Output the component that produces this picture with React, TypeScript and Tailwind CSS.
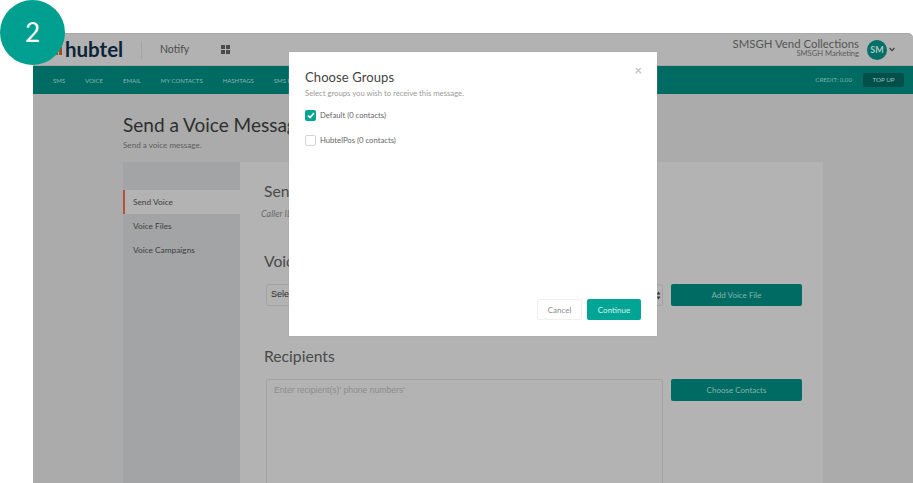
import React from "react";

const nav = ["SMS", "VOICE", "EMAIL", "MY CONTACTS", "HASHTAGS", "SMS REPORTS"];

export default function App() {
  return (
    <div className="relative w-[913px] h-[483px] overflow-hidden bg-white font-['Lato','Open_Sans',sans-serif]">
      <div className="ml-[33px] mt-[33px] absolute inset-0 w-[880px] h-[450px] flex flex-col rounded-tr-[5px] bg-[#ababab] overflow-hidden border-t border-[#a9a9a9]">
        <header className="h-[32px] shrink-0 flex items-center bg-[#b2b2b2] border-b border-[#a5a5a5]">
          <svg className="ml-[21px] shrink-0" width="8" height="10" viewBox="0 0 8 10" fill="#a8482a">
            <path d="M0 3 L4 0 V10 H0 Z" />
            <path d="M5 2 H8 V10 H5 Z" />
          </svg>
          <div className="ml-[3px] w-[58px] flex items-center text-[20.5px] leading-none font-bold text-[#0c2438]">hubtel</div>
          <div className="ml-[18px] h-[18px] w-px bg-[#a3a3a3]" />
          <span className="ml-[18px] text-[10.5px] text-[#4a4a4a]">Notify</span>
          <svg className="ml-[32px]" width="9" height="9" viewBox="0 0 9 9" fill="#4b4b4b">
            <rect x="0" y="0" width="4" height="4" />
            <rect x="5" y="0" width="4" height="4" />
            <rect x="0" y="5" width="4" height="4" />
            <rect x="5" y="5" width="4" height="4" />
          </svg>
          <div className="ml-auto flex flex-col items-end leading-none -mt-[4px]">
            <span className="text-[11.4px] text-[#555]">SMSGH Vend Collections</span>
            <span className="mt-[1px] text-[7.6px] text-[#5a5a5a]">SMSGH Marketing</span>
          </div>
          <div className="ml-[8px] w-[20px] h-[20px] rounded-full bg-[#006f66] flex items-center justify-center text-[9px] font-bold text-[#a8c8c4]">SM</div>
          <svg className="ml-[2px] mr-[18px]" width="6" height="5" viewBox="0 0 6 5" fill="none" stroke="#3d3d3d" strokeWidth="1.2">
            <path d="M0.6 1 L3 3.6 L5.4 1" />
          </svg>
        </header>
        <nav className="h-[28px] shrink-0 flex items-center gap-[20px] bg-[#006b63] pl-[20px] pr-[9px] text-[6px] text-[#8ab5b0]">
          {nav.map((n) => (
            <span key={n} className="whitespace-nowrap">{n}</span>
          ))}
          <span className="ml-auto text-[6.2px] text-[#7fb0aa]">CREDIT: 0.00</span>
          <span className="-ml-[9px] w-[41px] h-[14px] rounded-[2px] bg-[#004f49] flex items-center justify-center text-[6.3px] text-[#9dbfbb]">TOP UP</span>
        </nav>
        <main className="flex-1 pl-[90px] pr-[90px]">
          <h1 className="mt-[18px] text-[19px] leading-[26px] text-[#2e2e2e]">Send a Voice Message</h1>
          <p className="mt-[1px] text-[8.1px] leading-[12px] text-[#5e5e5e]">Send a voice message.</p>
          <div className="mt-[11px] flex h-[330px]">
            <aside className="w-[117px] shrink-0 bg-[#a3a4a6] pt-[28px] text-[8.3px] text-[#3e3e3e]">
              <div className="h-[24px] flex items-center pl-[8px] border-l-2 border-[#b4532f] bg-[#b3b3b3]">Send Voice</div>
              <div className="h-[24px] flex items-center pl-[10px]">Voice Files</div>
              <div className="h-[24px] flex items-center pl-[10px]">Voice Campaigns</div>
            </aside>
            <section className="flex-1 bg-[#b3b3b3] pl-[24px] pr-[21px]">
              <h2 className="mt-[19px] text-[15.7px] leading-[20px] text-[#4a4a4a]">Send Voice</h2>
              <p className="mt-[7px] -ml-[3px] text-[9px] leading-[12px] italic text-[#6b6b6b]">Caller ID</p>
              <h2 className="mt-[30px] text-[15.7px] leading-[22px] text-[#4a4a4a]">Voice File</h2>
              <div className="mt-[12px] flex gap-[8px]">
                <div className="w-[397px] ml-[2px] h-[22px] flex items-center justify-between rounded-[3px] border border-[#a3a3a3] bg-[#b3b3b3] pl-[4px] pr-[1px] text-[9px] text-[#2f2f2f] font-['Liberation_Sans',sans-serif]">
                  <span>Select</span>
                  <svg width="5" height="9" viewBox="0 0 5 9" fill="#333">
                    <path d="M2.5 0.5 L4.5 3.5 H0.5 Z" />
                    <path d="M2.5 8.5 L4.5 5.5 H0.5 Z" />
                  </svg>
                </div>
                <button className="w-[131px] h-[22px] rounded-[2px] bg-[#006b63] text-[8px] text-[#86b3ae]">Add Voice File</button>
              </div>
              <h2 className="mt-[38px] text-[15.7px] leading-[24px] text-[#4a4a4a]">Recipients</h2>
              <div className="mt-[11px] flex gap-[8px]">
                <div className="w-[397px] ml-[2px] h-[140px] rounded-[2px] border border-[#a3a3a3] pl-[7px] pt-[4px] text-[8.6px] text-[#8d8d8d] font-['Liberation_Sans',sans-serif]">Enter recipient(s)' phone numbers'</div>
                <button className="w-[131px] h-[22px] rounded-[2px] bg-[#006b63] text-[8px] text-[#86b3ae]">Choose Contacts</button>
              </div>
            </section>
          </div>
        </main>
      </div>

      <div className="absolute left-0 top-0 w-[65px] h-[65px] rounded-full bg-[#009f90] flex items-center justify-center text-[26px] text-white">2</div>

      <div className="absolute left-[289px] top-[52px] w-[368px] h-[284px] bg-white flex flex-col pl-[16px] pr-[16px] shadow-[0_0_1px_#999]">
        <span className="absolute right-[15px] top-[11px] text-[13px] leading-[14px] font-bold text-[#c4c4c4]">×</span>
        <h3 className="mt-[15px] text-[13px] tracking-[0.1px] leading-[20px] text-[#444]">Choose Groups</h3>
        <p className="mt-[0px] text-[7.7px] leading-[12px] text-[#9a9a9a]">Select groups you wish to receive this message.</p>
        <div className="mt-[10px] flex items-center gap-[4px] h-[12px]">
          <span className="w-[11px] h-[11px] rounded-[2px] bg-[#00a596] flex items-center justify-center">
            <svg width="8" height="7" viewBox="0 0 8 7" fill="none" stroke="#fff" strokeWidth="1.6">
              <path d="M1 3.5 L3 5.5 L7 1" />
            </svg>
          </span>
          <span className="relative top-[1px] text-[7.7px] text-[#666]">Default (0 contacts)</span>
        </div>
        <div className="mt-[13px] flex items-center gap-[4px] h-[12px]">
          <span className="w-[11px] h-[11px] rounded-[2px] border border-[#d4d4d4] bg-white" />
          <span className="relative top-[1px] text-[7.7px] text-[#666]">HubtelPos (0 contacts)</span>
        </div>
        <div className="mt-auto mb-[16px] flex justify-end gap-[5px]">
          <button className="w-[45px] h-[21px] rounded-[2px] border border-[#f0f0f0] text-[8px] text-[#8a8a8a]">Cancel</button>
          <button className="w-[54px] h-[21px] rounded-[2px] bg-[#00a596] text-[8px] text-[#d8f2ef]">Continue</button>
        </div>
      </div>
    </div>
  );
}
